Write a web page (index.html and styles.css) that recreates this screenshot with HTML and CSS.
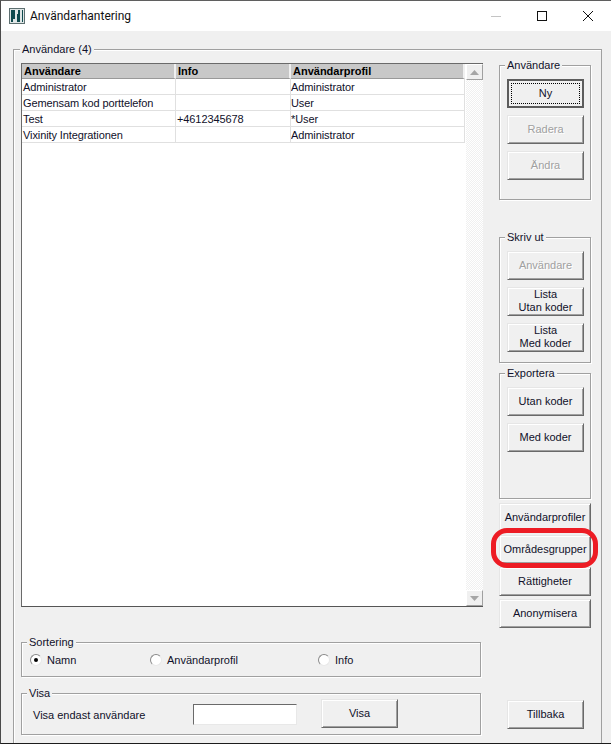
FILE: index.html
```html
<!DOCTYPE html>
<html lang="sv">
<head>
<meta charset="utf-8">
<title>Användarhantering</title>
<link rel="stylesheet" href="styles.css">
</head>
<body>
<div class="window">
  <header class="titlebar">
    <svg class="appicon" width="16" height="16" viewBox="0 0 16 16"><rect width="16" height="16" fill="#dfe6e6"/><rect x="0.5" y="0.5" width="15" height="15" fill="none" stroke="#5d6f70"/><path d="M2 2h4v9H4v3H2zM9 2h2v12H8V6h1zM13 2h1v12h-1z" fill="#0f4a4e"/></svg>
    <span class="title">Användarhantering</span>
    <div class="winctrls">
      <svg class="ctrl" width="46" height="31" viewBox="0 0 46 31"><path d="M18 15.500h10" stroke="#c4c4c4"/></svg>
      <svg class="ctrl" width="46" height="31" viewBox="0 0 46 31"><rect x="18.500" y="10.500" width="9" height="9" fill="none" stroke="#111"/></svg>
      <svg class="ctrl" width="46" height="31" viewBox="0 0 46 31"><path d="M18 10l10 10M28 10L18 20" stroke="#111" fill="none"/></svg>
    </div>
  </header>
  <main class="client">
    <section class="outer">
      <span class="legend legend-outer">Användare (4)</span>
      <div class="leftcol">
        <div class="listbox">
          <div class="listarea">
            <table class="grid">
              <thead>
                <tr><th class="c1">Användare</th><th class="c2">Info</th><th class="c3">Användarprofil</th></tr>
              </thead>
              <tbody>
                <tr><td>Administrator</td><td></td><td>Administrator</td></tr>
                <tr><td>Gemensam kod porttelefon</td><td></td><td>User</td></tr>
                <tr><td>Test</td><td>+4612345678</td><td>*User</td></tr>
                <tr><td>Vixinity Integrationen</td><td></td><td>Administrator</td></tr>
              </tbody>
            </table>
          </div>
          <div class="scrollbar">
            <div class="sbtn"><svg width="9" height="5" viewBox="0 0 9 5"><path d="M4.500 0L9 5H0z" fill="#a6a6a6"/></svg></div>
            <div class="sbtrack"></div>
            <div class="sbtn"><svg width="9" height="5" viewBox="0 0 9 5"><path d="M0 0h9L4.500 5z" fill="#a6a6a6"/></svg></div>
          </div>
        </div>
        <section class="group sort">
          <span class="legend">Sortering</span>
          <label class="radio r1"><span class="dot checked"></span>Namn</label>
          <label class="radio r2"><span class="dot"></span>Användarprofil</label>
          <label class="radio r3"><span class="dot"></span>Info</label>
        </section>
        <section class="group show">
          <span class="legend">Visa</span>
          <span class="showlabel">Visa endast användare</span>
          <input class="field" type="text" aria-label="Visa endast användare">
          <button class="btn showbtn">Visa</button>
        </section>
      </div>
      <div class="rightcol">
        <section class="group g-user">
          <span class="legend">Användare</span>
          <button class="btn default"><span class="focus">Ny</span></button>
          <button class="btn disabled">Radera</button>
          <button class="btn disabled">Ändra</button>
        </section>
        <section class="group g-print">
          <span class="legend">Skriv ut</span>
          <button class="btn disabled">Användare</button>
          <button class="btn two">Lista<br>Utan koder</button>
          <button class="btn two">Lista<br>Med koder</button>
        </section>
        <section class="group g-export">
          <span class="legend">Exportera</span>
          <button class="btn">Utan koder</button>
          <button class="btn">Med koder</button>
        </section>
        <div class="actions">
          <button class="btn wide">Användarprofiler</button>
          <button class="btn wide">Områdesgrupper</button>
          <button class="btn wide">Rättigheter</button>
          <button class="btn wide">Anonymisera</button>
          <div class="highlight"></div>
        </div>
        <button class="btn back">Tillbaka</button>
      </div>
    </section>
  </main>
</div>
</body>
</html>
```

FILE: styles.css
```css
* { box-sizing: border-box; }
html, body { margin: 0; padding: 0; }
body {
  width: 611px;
  height: 744px;
  overflow: hidden;
  font-family: "Liberation Sans", Arial, sans-serif;
  font-size: 11px;
  color: #10102a;
}
.window {
  width: 611px;
  height: 744px;
  display: flex;
  flex-direction: column;
  border-top: 1px solid #5f5f5f;
  border-left: 1px solid #4a4a4a;
  border-bottom: 1px solid #1c1c1c;
  background: #f0f0f0;
}
.titlebar {
  height: 30px;
  flex: none;
  display: flex;
  align-items: center;
  background: #fff;
  padding-left: 8px;
}
.appicon { flex: none; }
.title {
  margin-left: 5px;
  font-family: Roboto, sans-serif;
  font-size: 12px;
  color: #111;
}
.winctrls { margin-left: auto; display: flex; }
.ctrl { display: block; }
.client {
  flex: 1;
  min-height: 0;
  padding: 18px 9px 0 12px;
}
.outer {
  position: relative;
  height: 100%;
  border: 1px solid #a0a0a0;
  border-bottom: 0;
  box-shadow: inset 1px 1px 0 #fff;
  display: flex;
  padding: 13px 0 0 7px;
  gap: 16px;
}
.legend {
  position: absolute;
  top: -8px;
  left: 5px;
  padding: 0 2px;
  background: #f0f0f0;
  line-height: 14px;
  white-space: nowrap;
}
.legend-outer { left: 6px; }
.leftcol { width: 462px; flex: none; display: flex; flex-direction: column; }
.listbox {
  height: 544px;
  flex: none;
  display: flex;
  background: #fff;
  border: 1px solid #6a6a6a;
  border-right-color: #555;
  border-bottom-color: #555;
}
.listarea { width: 443px; flex: none; }
.grid {
  border-collapse: separate;
  border-spacing: 0;
  table-layout: fixed;
  width: 443px;
}
.grid th {
  height: 15px;
  padding: 1px 0 0 2px;
  text-align: left;
  font-weight: 700;
  font-size: 11px;
  line-height: 13px;
  color: #000;
  background: #c8c8c8;
  border-right: 2px solid #f0f0f0;
  border-bottom: 1px solid #999;
}
.grid td {
  height: 16px;
  padding: 0 0 0 1px;
  line-height: 14px;
  letter-spacing: -0.1px;
  white-space: nowrap;
  overflow: hidden;
  border-right: 1px solid #e0e0e0;
  border-bottom: 1px solid #e0e0e0;
}
.grid td:nth-child(3) { padding-left: 0; }
.grid .c1 { width: 154px; }
.grid .c2 { width: 115px; }
.scrollbar {
  width: 17px;
  margin-left: 1px;
  flex: none;
  display: flex;
  flex-direction: column;
}
.sbtn {
  height: 16px;
  flex: none;
  display: flex;
  align-items: center;
  justify-content: center;
  background: #f0f0f0;
  border: 1px solid;
  border-color: #fff #a0a0a0 #a0a0a0 #fff;
}
.sbtn svg { display: block; }
.sbtrack {
  flex: 1;
  background: repeating-conic-gradient(#f0f0f0 0 25%, #fff 0 50%) 0 0 / 2px 2px;
}
.group {
  position: relative;
  border: 1px solid #a0a0a0;
  box-shadow: inset 1px 1px 0 #fff, 1px 1px 0 #fff;
}
.sort {
  width: 460px;
  height: 35px;
  margin-top: 35px;
  flex: none;
  display: flex;
  align-items: center;
  padding: 0 0 0 8px;
}
.radio { display: flex; align-items: center; gap: 5px; }
.r1 { width: 120px; }
.r2 { width: 168px; }
.dot {
  width: 12px;
  height: 12px;
  border-radius: 50%;
  flex: none;
  display: flex;
  align-items: center;
  justify-content: center;
  background: #fff;
  border: 1px solid;
  border-color: #8a8a8a #e8e8e8 #e8e8e8 #8a8a8a;
}
.checked::after {
  content: "";
  width: 4px;
  height: 4px;
  border-radius: 50%;
  background: #000;
}
.show {
  width: 460px;
  height: 42px;
  margin-top: 16px;
  flex: none;
  display: flex;
  align-items: center;
  padding-left: 11px;
}
.showlabel { width: 160px; flex: none; padding-top: 1px; }
.field {
  width: 104px;
  height: 21px;
  flex: none;
  margin: 1px 0 0 0;
  padding: 0;
  background: #fff;
  border: 1px solid;
  border-color: #6a6a6a #e8e8e8 #e8e8e8 #6a6a6a;
  outline: 0;
}
.btn {
  display: block;
  width: 77px;
  height: 29px;
  flex: none;
  padding: 0;
  font: inherit;
  line-height: 13px;
  color: #10102a;
  text-align: center;
  background: #f0f0f0;
  border: 1px solid;
  border-color: #e6e6e6 #696969 #696969 #e6e6e6;
  box-shadow: inset 1px 1px 0 #fff, inset -1px -1px 0 #a0a0a0;
}
.showbtn { margin-left: 24px; margin-top: -1px; }
.default {
  border: 2px solid #5c5c5c;
  box-shadow: none;
  padding: 2px;
}
.focus {
  display: flex;
  height: 100%;
  align-items: center;
  justify-content: center;
  padding-bottom: 1px;
  border: 1px dotted #000;
}
.disabled { color: #a0a0a0; text-shadow: 1px 1px 0 #fff; }
.two { line-height: 13px; padding-bottom: 1px; }
.g-user, .g-print, .g-export {
  display: flex;
  flex-direction: column;
  gap: 7px;
  padding: 13px 0 0 7px;
  width: 92px;
}
.g-user { height: 135px; margin-top: 2px; }
.g-print { height: 126px; margin-top: 37px; }
.g-export { height: 126px; margin-top: 10px; }
.rightcol { width: 92px; flex: none; display: flex; flex-direction: column; }
.actions {
  position: relative;
  margin-top: 4px;
  display: flex;
  flex-direction: column;
  gap: 3px;
}
.wide { width: 92px; }
.highlight {
  position: absolute;
  left: -8px;
  top: 25px;
  width: 107px;
  height: 40px;
  border: 5px solid #ed1c24;
  border-radius: 16px;
  pointer-events: none;
}
.back { margin: 72px 0 0 8px; }
```
